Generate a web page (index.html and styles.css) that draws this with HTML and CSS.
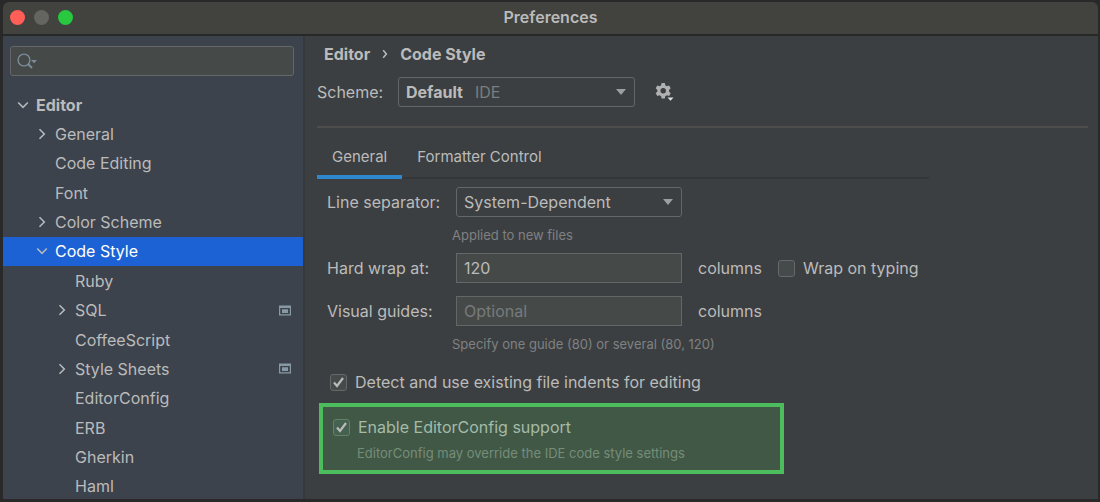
FILE: index.html
```html
<!DOCTYPE html>
<html lang="en">
<head>
<meta charset="utf-8">
<meta name="viewport" content="width=device-width, initial-scale=1">
<title>Preferences</title>
<link rel="stylesheet" href="styles.css">
</head>
<body>
<svg class="symbols" aria-hidden="true">
  <symbol id="right" viewBox="0 0 12 12"><path d="M3.5 1.2 8.3 6 3.5 10.8" fill="none" stroke="currentColor" stroke-width="1.6"/></symbol>
  <symbol id="down" viewBox="0 0 12 12"><path d="M1.2 3.5 6 8.3 10.8 3.5" fill="none" stroke="currentColor" stroke-width="1.6"/></symbol>
  <symbol id="project" viewBox="0 0 12 11"><path fill="currentColor" fill-rule="evenodd" d="M0 0.5h12v10H0zM1.2 3v6.3h9.600V3zM3 4.2h6v3.8H3z"/></symbol>
</svg>
<div class="window">
  <header class="titlebar">
    <div class="lights">
      <button class="light close" aria-label="Close"></button>
      <button class="light minimize" aria-label="Minimize"></button>
      <button class="light zoom" aria-label="Zoom"></button>
    </div>
    <h1 class="title">Preferences</h1>
  </header>
  <div class="body">
    <aside class="sidebar">
      <label class="search">
        <svg class="search-icon" viewBox="0 0 20 16" aria-hidden="true"><circle cx="7" cy="7" r="5.900" fill="none" stroke="currentColor" stroke-width="1.400"/><path d="M11 11 15 15" stroke="currentColor" stroke-width="2"/><path d="M14 7h6l-3 3.200z" fill="currentColor"/></svg>
        <input class="search-input" type="text" aria-label="Search settings">
      </label>
      <nav class="tree" aria-label="Settings">
        <a class="node root" href="#"><svg class="arrow"><use href="#down"/></svg>Editor</a>
        <a class="node level1" href="#"><svg class="arrow"><use href="#right"/></svg>General</a>
        <a class="node level1" href="#"><span class="arrow"></span>Code Editing</a>
        <a class="node level1" href="#"><span class="arrow"></span>Font</a>
        <a class="node level1" href="#"><svg class="arrow"><use href="#right"/></svg>Color Scheme</a>
        <a class="node level1 selected" href="#" aria-current="page"><svg class="arrow"><use href="#down"/></svg>Code Style</a>
        <a class="node level2" href="#"><span class="arrow"></span>Ruby</a>
        <a class="node level2" href="#"><svg class="arrow"><use href="#right"/></svg>SQL<svg class="scope"><use href="#project"/></svg></a>
        <a class="node level2" href="#"><span class="arrow"></span>CoffeeScript</a>
        <a class="node level2" href="#"><svg class="arrow"><use href="#right"/></svg>Style Sheets<svg class="scope"><use href="#project"/></svg></a>
        <a class="node level2" href="#"><span class="arrow"></span>EditorConfig</a>
        <a class="node level2" href="#"><span class="arrow"></span>ERB</a>
        <a class="node level2" href="#"><span class="arrow"></span>Gherkin</a>
        <a class="node level2" href="#"><span class="arrow"></span>Haml</a>
      </nav>
    </aside>
    <main class="content">
      <nav class="crumbs" aria-label="Breadcrumb"><span>Editor</span><svg class="crumb-arrow" viewBox="0 0 6 10" aria-hidden="true"><path d="M1.2 1.2 4.4 5 1.2 8.8" fill="none" stroke="currentColor" stroke-width="1.5"/></svg><span>Code Style</span></nav>
      <div class="scheme">
        <label class="scheme-label" for="scheme">Scheme:</label>
        <div class="dropdown scheme-dropdown">
          <select class="select bold" id="scheme"><option>Default</option></select>
          <span class="kind">IDE</span>
          <svg class="caret" viewBox="0 0 10 6" aria-hidden="true"><path d="M0 0h10L5 6z" fill="currentColor"/></svg>
        </div>
        <button class="gear" aria-label="Scheme actions">
          <svg class="gear-icon" viewBox="0 0 20 20" aria-hidden="true">
            <path fill="currentColor" fill-rule="evenodd" d="M6.6 1h3.2l.5 2.3 1.5.9 2.3-.7 1.6 2.8L14 7.900v1.700l1.700 1.600-1.600 2.800-2.300-.7-1.500.9-.5 2.300H6.600l-.5-2.300-1.500-.9-2.300.7L.7 11.200 2.400 9.600V7.900L.7 6.300l1.600-2.800 2.300.7 1.500-.9zM8.200 6a2.750 2.750 0 1 0 0 5.500 2.750 2.750 0 0 0 0-5.500z"/>
            <path d="M12.500 15.500h6l-3 3.200z" fill="#e0e0e0"/>
          </svg>
        </button>
      </div>
      <div class="panel">
        <div class="tabs" role="tablist">
          <button class="tab active" role="tab" aria-selected="true">General</button>
          <button class="tab" role="tab" aria-selected="false">Formatter Control</button>
        </div>
        <div class="form">
          <label for="separator">Line separator:</label>
          <div class="dropdown">
            <select class="select" id="separator"><option>System-Dependent</option></select>
            <svg class="caret" viewBox="0 0 10 6" aria-hidden="true"><path d="M0 0h10L5 6z" fill="currentColor"/></svg>
          </div>
          <p class="hint files">Applied to new files</p>
          <label for="wrap">Hard wrap at:</label>
          <input class="field" id="wrap" type="text" value="120">
          <div class="after"><span>columns</span><label class="check"><input class="box" type="checkbox">Wrap on typing</label></div>
          <label class="guides" for="guides">Visual guides:</label>
          <input class="field guides" id="guides" type="text" placeholder="Optional">
          <div class="after guides"><span>columns</span></div>
          <p class="hint">Specify one guide (80) or several (80, 120)</p>
        </div>
        <label class="check detect"><input class="box" type="checkbox" checked>Detect and use existing file indents for editing</label>
        <section class="highlight">
          <label class="check"><input class="box" type="checkbox" checked aria-describedby="ec-note">Enable EditorConfig support</label>
          <p class="note" id="ec-note">EditorConfig may override the IDE code style settings</p>
        </section>
      </div>
    </main>
  </div>
</div>
</body>
</html>
```
FILE: styles.css
```css
* { box-sizing: border-box; }

body {
  margin: 0;
  background: #292929;
  color: #bbbbbb;
  font-family: Inter, "Liberation Sans", sans-serif;
  font-size: 16px;
  line-height: 20px;
}

button, input, select { font: inherit; color: inherit; margin: 0; }
button { border: 0; padding: 0; background: none; }
p, h1 { margin: 0; }
.symbols { display: none; }

.window {
  display: flex;
  flex-direction: column;
  height: 100vh;
  border: solid #292929;
  border-width: 2px 2px 3px 3px;
}

.titlebar {
  display: grid;
  grid-template-columns: 1fr auto 1fr;
  align-items: center;
  flex: none;
  height: 34px;
  padding: 0 7px 2px;
  background: #42423f;
  border-bottom: 2px solid #252928;
  border-radius: 6px 6px 0 0;
}
.lights { display: flex; gap: 9px; }
.light { width: 15px; height: 15px; border-radius: 50%; }
.close { background: #ff5f57; }
.minimize { background: #646461; }
.zoom { background: #28c840; }
.title { font-size: 16px; font-weight: 600; }

.body { display: flex; flex: 1; min-height: 0; }

.sidebar {
  display: flex;
  flex-direction: column;
  flex: none;
  width: 302px;
  overflow: hidden;
  background: #3d434d;
  border-right: 2px solid #36393c;
}
.search {
  display: flex;
  align-items: center;
  gap: 4px;
  flex: none;
  height: 30px;
  margin: 10px 9px 14px 7px;
  padding: 0 6px;
  background: #454a49;
  border: 1px solid #646668;
  border-radius: 3px;
}
.search-icon { flex: none; width: 20px; height: 16px; color: #7b8b98; }
.search-input { flex: 1; min-width: 0; padding: 0; background: none; border: 0; outline: 0; }

.tree { display: flex; flex-direction: column; flex: 1; margin-bottom: -2px; }
.node {
  display: flex;
  align-items: center;
  flex: 1;
  padding: 0 12px 0 14px;
  color: #bbbbbb;
  text-decoration: none;
}
.root { font-weight: 700; }
.level1 { padding-left: 33px; }
.level2 { padding-left: 53px; }
.selected { background: #1c62d4; color: #ffffff; }
.arrow { flex: none; width: 12px; height: 12px; margin-right: 7px; color: #b5b8bb; }
.scope { width: 12px; height: 11px; margin-left: auto; color: #8799a4; }

.content { flex: 1; min-width: 0; padding: 8px 10px 0 12px; background: #3c3f41; }
.crumbs { display: flex; align-items: center; gap: 12px; padding-left: 7px; font-weight: 700; }
.crumb-arrow { width: 6px; height: 10px; }

.scheme {
  display: flex;
  align-items: center;
  padding: 13px 0 19px;
  border-bottom: 2px solid #4d4e4c;
}
.scheme-label { width: 81px; }
.scheme-dropdown { width: 237px; }
.dropdown { display: grid; align-items: center; }
.dropdown > * { grid-area: 1 / 1; }
.select {
  appearance: none;
  width: 100%;
  height: 30px;
  padding: 0 30px 0 7px;
  background: #3c3f41;
  border: 1px solid #646668;
  border-radius: 3px;
}
.bold { font-weight: 700; }
.kind { margin-left: 77px; color: #7b7d7e; pointer-events: none; }
.caret { justify-self: end; width: 10px; height: 6px; margin-right: 9px; color: #9b9ea2; pointer-events: none; }
.gear { margin-left: 20px; }
.gear-icon { display: block; width: 20px; height: 20px; color: #afb1b3; }

.panel { width: 80%; max-width: 612px; }
.tabs { display: flex; margin-top: 6px; box-shadow: inset 0 -2px #343638; }
.tab { height: 45px; padding: 4px 15px 0; border-bottom: 4px solid transparent; font-size: 15px; }
.active { border-color: #2f87d0; }

.form {
  display: grid;
  grid-template-columns: 119px 226px 1fr;
  column-gap: 10px;
  align-items: center;
  padding: 8px 0 0 10px;
}
.hint { grid-column: 2 / -1; margin: 8px 0 0 -4px; color: #7f8182; font-size: 13px; }
.files { margin-bottom: 8px; }
.guides { margin-top: 13px; }
.field {
  width: 100%;
  height: 30px;
  padding: 0 7px;
  background: #454a49;
  border: 1px solid #646668;
  outline: 0;
}
.field::placeholder { color: #787a7b; opacity: 1; }
.after { display: flex; gap: 16px; padding-left: 6px; white-space: nowrap; }

.check { display: flex; align-items: center; gap: 8px; }
.box {
  appearance: none;
  flex: none;
  width: 17px;
  height: 17px;
  background: #444b4a;
  border: 1px solid #66696a;
  border-radius: 3px;
}
.box:checked {
  background: #444b4a url("data:image/svg+xml,%3Csvg xmlns='http://www.w3.org/2000/svg' viewBox='0 0 15 15'%3E%3Cpath d='M3 7.500 6 11 12 3' fill='none' stroke='%23bbbbbb' stroke-width='2.200'/%3E%3C/svg%3E");
}
.detect { padding: 18px 0 11px 13px; }

.highlight {
  width: 76%;
  margin-left: 2px;
  padding: 10px 10px 7px;
  background: #415847;
  border: 4px solid #4dbc5d;
  color: #a4bba7;
}
.highlight .box { background-color: #45614f; border-color: #648069; }
.note { margin: 6px 0 0 24px; color: #758d77; font-size: 13px; }
```
